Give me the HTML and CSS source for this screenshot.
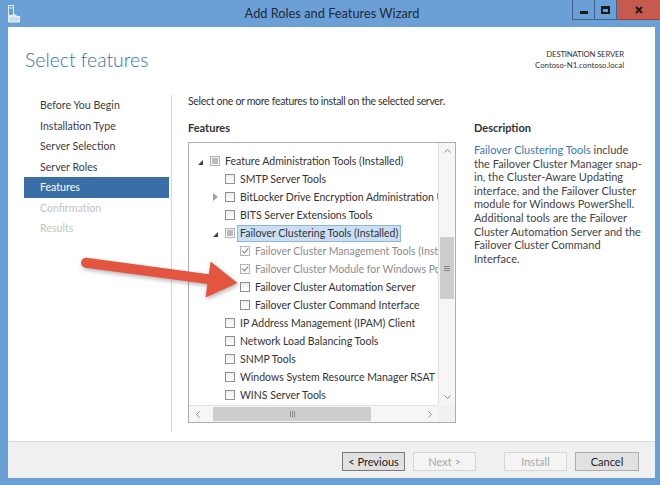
FILE: index.html
```html
<!DOCTYPE html>
<html lang="en">
<head>
    <meta charset="UTF-8">
    <title>Add Roles and Features Wizard</title>
    <link rel="stylesheet" href="styles.css">
</head>
<body>
<div class="window">
    <div class="titlebar">
        <svg class="app-icon" width="14" height="18" viewBox="0 0 14 18">
            <rect x="1.5" y="0.5" width="5" height="10" fill="none" stroke="#e4eef9" stroke-width="1"/>
            <line x1="2.5" y1="3" x2="5.5" y2="3" stroke="#e4eef9"/>
            <path d="M1.5 11.5 h11 v5.5 h-11z" fill="#c9dcf0" stroke="#eef4fb"/>
            <path d="M4 11.5 q3 -4 6 0" fill="#d6e5f5" stroke="#eef4fb"/>
        </svg>
        <div class="title">Add Roles and Features Wizard</div>
        <div class="caption-buttons">
            <div class="cap-btn min"><span class="min-glyph"></span></div>
            <div class="cap-btn max"><span class="max-glyph"></span></div>
            <div class="cap-btn close">
                <svg width="8" height="8" viewBox="0 0 8 8"><path d="M1 1 L7 7 M7 1 L1 7" stroke="#1a1a1a" stroke-width="2"/></svg>
            </div>
        </div>
    </div>

    <div class="client">
        <div class="header">
            <h1>Select features</h1>
            <div class="dest">
                <div class="dest-caption">DESTINATION SERVER</div>
                <div>Contoso-N1.contoso.local</div>
            </div>
        </div>

        <div class="content">
            <ul class="steps">
                <li>Before You Begin</li>
                <li>Installation Type</li>
                <li>Server Selection</li>
                <li>Server Roles</li>
                <li class="active">Features</li>
                <li class="disabled">Confirmation</li>
                <li class="disabled">Results</li>
            </ul>

            <div class="main">
                <p class="intro">Select one or more features to install on the selected server.</p>
                <div class="columns">
                    <div class="features-col">
                        <h3>Features</h3>
                        <div class="tree-box">
                            <div class="tree">
                                <div class="row l0"><span class="exp open"></span><span class="cb partial"></span><span class="label">Feature Administration Tools (Installed)</span></div>
                                <div class="row l1"><span class="exp"></span><span class="cb"></span><span class="label">SMTP Server Tools</span></div>
                                <div class="row l1"><span class="exp closed"></span><span class="cb"></span><span class="label">BitLocker Drive Encryption Administration Utilities</span></div>
                                <div class="row l1"><span class="exp"></span><span class="cb"></span><span class="label">BITS Server Extensions Tools</span></div>
                                <div class="row l1"><span class="exp open"></span><span class="cb partial"></span><span class="label selected">Failover Clustering Tools (Installed)</span></div>
                                <div class="row l2 installed"><span class="exp"></span><span class="cb checked"></span><span class="label">Failover Cluster Management Tools (Installed)</span></div>
                                <div class="row l2 installed"><span class="exp"></span><span class="cb checked"></span><span class="label">Failover Cluster Module for Windows PowerShell (Installed)</span></div>
                                <div class="row l2"><span class="exp"></span><span class="cb"></span><span class="label">Failover Cluster Automation Server</span></div>
                                <div class="row l2"><span class="exp"></span><span class="cb"></span><span class="label">Failover Cluster Command Interface</span></div>
                                <div class="row l1"><span class="exp"></span><span class="cb"></span><span class="label">IP Address Management (IPAM) Client</span></div>
                                <div class="row l1"><span class="exp"></span><span class="cb"></span><span class="label">Network Load Balancing Tools</span></div>
                                <div class="row l1"><span class="exp"></span><span class="cb"></span><span class="label">SNMP Tools</span></div>
                                <div class="row l1"><span class="exp"></span><span class="cb"></span><span class="label">Windows System Resource Manager RSAT [Deprecated]</span></div>
                                <div class="row l1"><span class="exp"></span><span class="cb"></span><span class="label">WINS Server Tools</span></div>
                            </div>
                            <div class="vscroll">
                                <div class="sb-arrow"><svg width="7" height="4" viewBox="0 0 7 4"><path d="M0.5 3.5 L3.5 0.5 L6.5 3.5" fill="none" stroke="#8a8a8a"/></svg></div>
                                <div class="v-before"></div>
                                <div class="v-thumb"><span class="grip-h"></span></div>
                                <div class="sb-fill"></div>
                                <div class="sb-arrow"><svg width="7" height="4" viewBox="0 0 7 4"><path d="M0.5 0.5 L3.5 3.5 L6.5 0.5" fill="none" stroke="#8a8a8a"/></svg></div>
                            </div>
                            <div class="hscroll">
                                <div class="sb-arrow"><svg width="4" height="7" viewBox="0 0 4 7"><path d="M3.5 0.5 L0.5 3.5 L3.5 6.5" fill="none" stroke="#8a8a8a"/></svg></div>
                                <div class="h-before"></div>
                                <div class="h-thumb"><span class="grip-v"></span></div>
                                <div class="sb-fill"></div>
                                <div class="sb-arrow"><svg width="4" height="7" viewBox="0 0 4 7"><path d="M0.5 0.5 L3.5 3.5 L0.5 6.5" fill="none" stroke="#8a8a8a"/></svg></div>
                            </div>
                            <div class="corner"></div>
                        </div>
                    </div>
                    <div class="desc-col">
                        <h3>Description</h3>
                        <p><span class="link">Failover Clustering Tools</span> include<br>
                        the Failover Cluster Manager snap-<br>
                        in, the Cluster-Aware Updating<br>
                        interface, and the Failover Cluster<br>
                        module for Windows PowerShell.<br>
                        Additional tools are the Failover<br>
                        Cluster Automation Server and the<br>
                        Failover Cluster Command<br>
                        Interface.</p>
                    </div>
                </div>
            </div>
        </div>

        <div class="footer">
            <button class="btn focused">&lt; Previous</button>
            <button class="btn" disabled>Next &gt;</button>
            <button class="btn install" disabled>Install</button>
            <button class="btn">Cancel</button>
        </div>
    </div>

    <!-- red callout arrow pasted over the screenshot -->
    <svg class="callout" width="660" height="485" viewBox="0 0 660 485">
        <g class="callout-shape">
            <line x1="86" y1="262.8" x2="212" y2="279.6" stroke="#e4553f" stroke-width="10" stroke-linecap="round"/>
            <polygon points="210.6,261.5 237.5,283 205.5,297.5" fill="#e4553f"/>
        </g>
    </svg>
</div>
</body>
</html>
```

FILE: styles.css
```css
body {
    margin: 0;
    background-color: #6ba0d7;
    font-family: Lato, "Open Sans", sans-serif;
    font-size: 11px;
    color: #333;
}
.window {
    position: relative;
    width: 660px;
    height: 485px;
    display: flex;
    flex-direction: column;
}

/* title bar */
.titlebar {
    height: 27px;
    flex: none;
    display: grid;
    grid-template-columns: 1fr auto 1fr;
    align-items: start;
}
.app-icon {
    margin: 5px 0 0 7px;
}
.title {
    font-size: 12.8px;
    color: #1f2a36;
    line-height: 27px;
    padding-left: 4px;
}
.caption-buttons {
    justify-self: end;
    display: flex;
    height: 20px;
    border-left: 1px solid #3e638c;
}
.cap-btn {
    height: 20px;
    box-sizing: border-box;
    display: flex;
    align-items: center;
    justify-content: center;
}
.cap-btn.min, .cap-btn.max {
    width: 22px;
    border-right: 1px solid #3e638c;
    border-bottom: 1px solid #3e638c;
}
.cap-btn.close {
    width: 43px;
    background-color: #c65a4f;
    border-bottom: 1px solid #9b4038;
}
.min-glyph {
    width: 8px;
    height: 3px;
    background-color: #1a1a1a;
    margin-top: 5px;
}
.max-glyph {
    width: 9px;
    height: 8px;
    box-sizing: border-box;
    border: 2px solid #1a1a1a;
    border-top-width: 3px;
}

/* client area */
.client {
    flex: 1;
    margin: 0 5px 7px 8px;
    background-color: #fff;
    display: flex;
    flex-direction: column;
}
.header {
    height: 68px;
    flex: none;
    box-sizing: border-box;
    padding: 20px 31px 0 17px;
    display: flex;
    justify-content: space-between;
    align-items: flex-start;
}
.header h1 {
    margin: 0;
    font-size: 19.4px;
    font-weight: 300;
    line-height: 26px;
    color: #3274ab;
}
.dest {
    text-align: right;
    font-size: 7.8px;
    line-height: 11px;
    color: #333;
    margin-top: 2px;
}
.dest-caption {
    letter-spacing: -0.2px;
}
.content {
    flex: 1;
    display: flex;
}
.steps {
    list-style: none;
    margin: 0 0 9px 0;
    padding: 0 2px 0 16px;
    width: 164px;
    box-sizing: border-box;
    border-right: 1px solid #d8d8d8;
    font-size: 10.6px;
}
.steps li {
    height: 20.5px;
    line-height: 20.5px;
    padding-left: 16px;
    color: #3c3c3c;
}
.steps li.active {
    background-color: #3a6ea6;
    color: #fff;
}
.steps li.disabled {
    color: #c3c3c3;
}
.main {
    flex: 1;
    padding-left: 16px;
}
.intro {
    margin: 0;
    line-height: 13px;
    font-size: 10.5px;
    letter-spacing: -0.3px;
}
.columns {
    display: flex;
    gap: 18px;
    margin-top: 13px;
}
h3 {
    margin: 0 0 7px 0;
    font-size: 11px;
    line-height: 14px;
    font-weight: bold;
    color: #333;
}

/* features tree */
.tree-box {
    width: 268px;
    height: 281px;
    box-sizing: border-box;
    border: 1px solid #abadb3;
    display: grid;
    grid-template-columns: 1fr 17px;
    grid-template-rows: 1fr 17px;
}
.tree {
    overflow: hidden;
    padding-top: 9px;
    white-space: nowrap;
    font-size: 10.5px;
}
.row {
    height: 18px;
    display: flex;
    align-items: center;
}
.row.l0 { padding-left: 6px; }
.row.l1 { padding-left: 21px; }
.row.l2 { padding-left: 36px; }
.exp {
    width: 15px;
    height: 18px;
    flex: none;
    position: relative;
}
.exp.open::after {
    content: "";
    position: absolute;
    left: 3px;
    top: 8px;
    border-style: solid;
    border-width: 0 0 5px 5px;
    border-color: transparent transparent #444 transparent;
}
.exp.closed::after {
    content: "";
    position: absolute;
    left: 3px;
    top: 5px;
    width: 0;
    height: 0;
    border-style: solid;
    border-width: 4px 0 4px 5px;
    border-color: transparent transparent transparent #a0a0a0;
}
.cb {
    width: 10px;
    height: 10px;
    box-sizing: border-box;
    border: 1px solid #8f8f8f;
    background: linear-gradient(#ededed, #fff);
    margin-right: 5px;
    flex: none;
    position: relative;
}
.cb.partial {
    border-color: #b3b3b3;
}
.cb.partial::after {
    content: "";
    position: absolute;
    inset: 1px;
    background-color: #bcbcbc;
}
.cb.checked {
    border-color: #b3b3b3;
    background: #fafafa;
}
.cb.checked::after {
    content: "";
    position: absolute;
    left: 2px;
    top: 0px;
    width: 3px;
    height: 5px;
    border: solid #7d7d7d;
    border-width: 0 1.5px 1.5px 0;
    transform: rotate(40deg);
}
.label {
    line-height: 15px;
}
.installed .label {
    color: #8c8c8c;
}
.label.selected {
    margin-left: -3px;
    padding: 0 2px;
    border: 1px solid #90b4da;
    background-color: #cadff4;
}

/* scrollbars */
.vscroll, .hscroll {
    display: flex;
    background-color: #f6f6f6;
}
.vscroll {
    flex-direction: column;
    border-left: 1px solid #e2e2e2;
}
.hscroll {
    border-top: 1px solid #e2e2e2;
}
.sb-arrow {
    flex: none;
    width: 16px;
    height: 16px;
    display: flex;
    align-items: center;
    justify-content: center;
}
.hscroll .sb-arrow {
    width: 17px;
}
.sb-fill {
    flex: 1;
}
.v-before {
    height: 78px;
}
.v-thumb {
    height: 62px;
    margin: 0 1px;
    background-color: #cdcdcd;
    display: flex;
    align-items: center;
    justify-content: center;
}
.h-before {
    width: 7px;
}
.h-thumb {
    width: 158px;
    margin: 1px 0;
    background-color: #cdcdcd;
    display: flex;
    align-items: center;
    justify-content: center;
}
.grip-h {
    width: 6px;
    height: 5px;
    background: repeating-linear-gradient(to bottom, #8a8a8a 0 1px, transparent 1px 2px);
}
.grip-v {
    width: 5px;
    height: 6px;
    background: repeating-linear-gradient(to right, #8a8a8a 0 1px, transparent 1px 2px);
}
.corner {
    background-color: #f0f0f0;
}

/* description */
.desc-col {
    width: 170px;
}
.desc-col p {
    margin: 8px 0 0 0;
    line-height: 13.6px;
    color: #444;
}
.link {
    color: #3a7ab3;
}

/* footer */
.footer {
    height: 37px;
    flex: none;
    box-sizing: border-box;
    border-top: 1px solid #dcdcdc;
    background-color: #f0f0f0;
    display: flex;
    justify-content: flex-end;
    align-items: flex-start;
    gap: 8px;
    padding: 10px 16px 0 0;
}
.btn {
    width: 63px;
    height: 19px;
    padding: 0;
    font-family: Lato, "Open Sans", sans-serif;
    font-size: 11px;
    color: #222;
    background-color: #e1e1e1;
    border: 1px solid #adadad;
}
.btn.focused {
    border-color: #7a7a7a;
}
.btn:disabled {
    background-color: #f4f4f4;
    border-color: #d6d6d6;
    color: #a8a8a8;
}
.btn.install {
    margin-left: 20px;
}
.btn:last-child {
    width: 64px;
}

/* overlay arrow */
.callout {
    position: absolute;
    left: 0;
    top: 0;
    pointer-events: none;
}
.callout-shape {
    filter: drop-shadow(1px 2px 2px rgba(0, 0, 0, 0.3));
}
```
